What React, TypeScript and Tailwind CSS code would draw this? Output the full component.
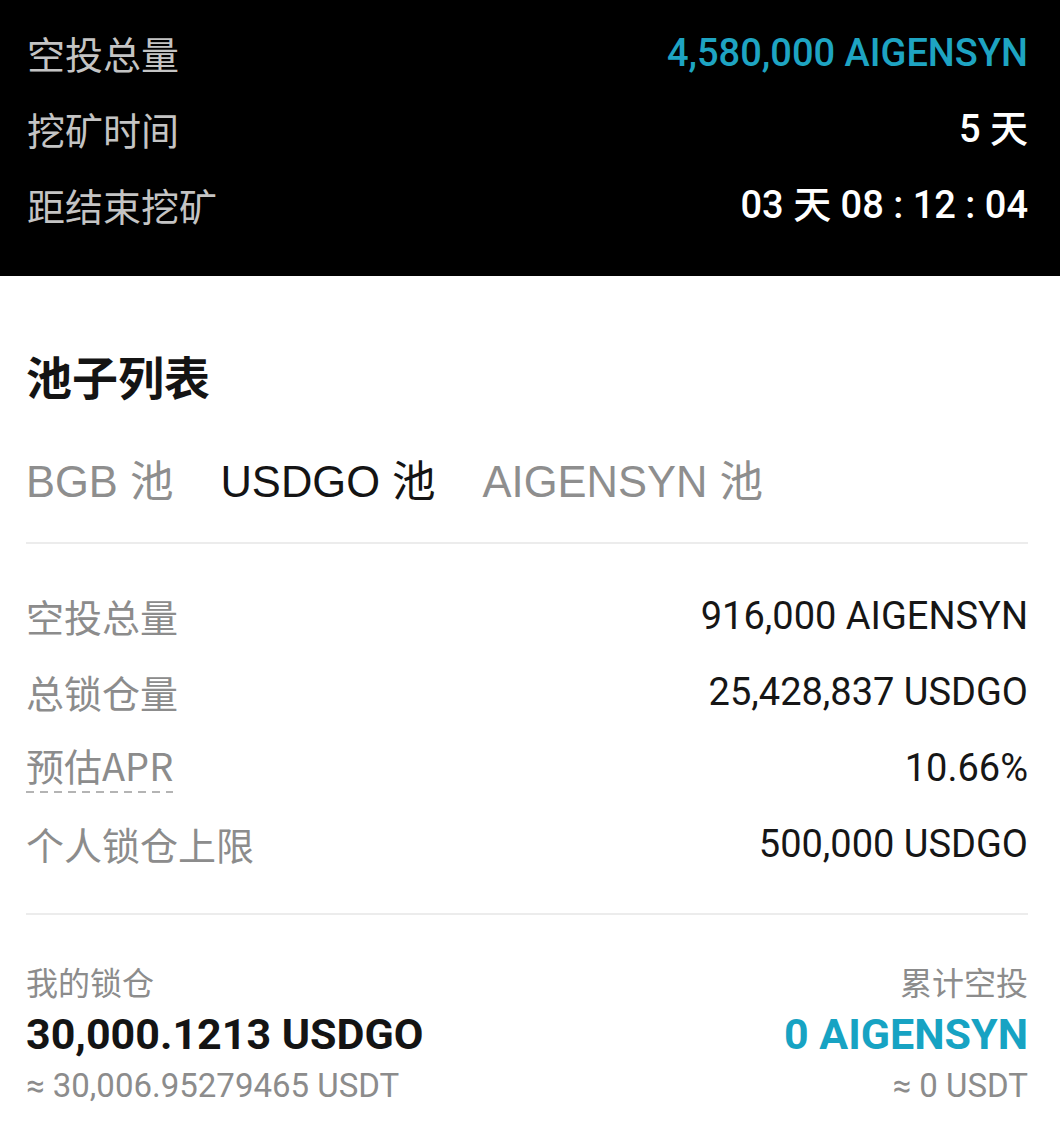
import React from "react";

const NUM = "font-['Roboto','Noto_Sans_CJK_SC',sans-serif]";
const CJK = "font-['Noto_Sans_CJK_SC','Noto_Sans',sans-serif]";

function TopRow({ label, value, cyan }: { label: string; value: string; cyan?: boolean }) {
  return (
    <div className="flex h-[76px] items-center justify-between">
      <span className={`${CJK} text-[38px] leading-none text-[#c4c4c4]`}>{label}</span>
      <span
        className={`${NUM} text-[38px] font-medium leading-none ${cyan ? "text-[#1ea4c2]" : "text-white"}`}
      >
        {value}
      </span>
    </div>
  );
}

function PoolRow({ label, value, dashed }: { label: string; value: string; dashed?: boolean }) {
  return (
    <div className="flex h-[76px] items-center justify-between">
      <div className="flex flex-col">
        <span className={`${CJK} text-[38px] leading-[44px] text-[#8c8c8c]`}>{label}</span>
        {dashed && (
          <div className="mt-[4px] h-[2px] w-full bg-[linear-gradient(to_right,#b4b4b4_55%,transparent_55%)] bg-[length:14px_2px] bg-repeat-x" />
        )}
      </div>
      <span className={`${NUM} text-[38px] leading-none text-[#161616]`}>{value}</span>
    </div>
  );
}

export default function App() {
  return (
    <div className="w-[1060px] min-h-[1134px] bg-white">
      <div className="bg-black pl-[27px] pr-[32px] pt-[15px] pb-[33px]">
        <TopRow label="空投总量" value="4,580,000 AIGENSYN" cyan />
        <TopRow label="挖矿时间" value="5 天" />
        <TopRow label="距结束挖矿" value="03 天 08 : 12 : 04" />
      </div>

      <div className="bg-white pl-[26px] pr-[32px] pt-[71px]">
        <h1 className={`${CJK} text-[46px] font-bold leading-[56px] text-[#141414]`}>池子列表</h1>

        <div className="mt-[52px] flex h-[56px] items-center gap-[47px] font-['Liberation_Sans','Noto_Sans_CJK_SC',sans-serif] text-[43.5px] leading-none">
          <span className="text-[#8e8e8e]">BGB 池</span>
          <span className="text-[#141414]">USDGO 池</span>
          <span className="text-[#8e8e8e]">AIGENSYN 池</span>
        </div>

        <div className="mt-[31px] h-[2px] bg-[#ececec]" />

        <div className="mt-[34px]">
          <PoolRow label="空投总量" value="916,000 AIGENSYN" />
          <PoolRow label="总锁仓量" value="25,428,837 USDGO" />
          <PoolRow label="预估APR" value="10.66%" dashed />
          <PoolRow label="个人锁仓上限" value="500,000 USDGO" />
        </div>

        <div className="mt-[31px] h-[2px] bg-[#ececec]" />

        <div className="mt-[46px] flex items-start justify-between">
          <div className="flex flex-col">
            <span className={`${CJK} text-[32px] leading-[40px] text-[#8c8c8c]`}>我的锁仓</span>
            <span className={`${NUM} mt-[7px] text-[43px] font-bold leading-[52px] text-[#141414]`}>
              30,000.1213 USDGO
            </span>
            <span className={`${NUM} mt-[6px] text-[33px] leading-[40px] text-[#8c8c8c]`}>
              ≈ 30,006.95279465 USDT
            </span>
          </div>
          <div className="flex flex-col items-end">
            <span className={`${CJK} text-[32px] leading-[40px] text-[#8c8c8c]`}>累计空投</span>
            <span className={`${NUM} mt-[7px] text-[43px] font-bold leading-[52px] text-[#17a3c3]`}>
              0 AIGENSYN
            </span>
            <span className={`${NUM} mt-[6px] text-[33px] leading-[40px] text-[#8c8c8c]`}>≈ 0 USDT</span>
          </div>
        </div>
      </div>
    </div>
  );
}
